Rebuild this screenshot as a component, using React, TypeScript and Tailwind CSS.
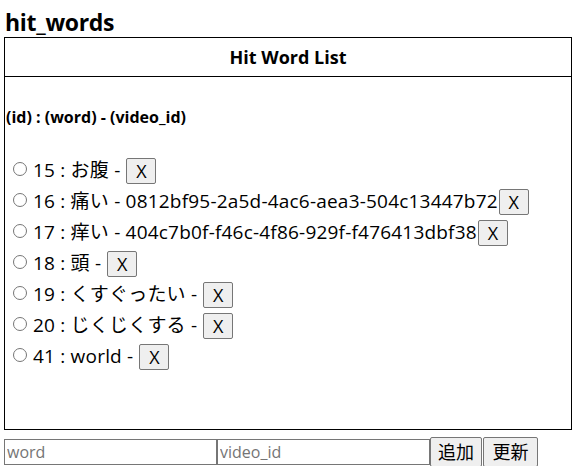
import React from 'react';

const WORDS = [
  { id: 15, word: 'お腹', video: '' },
  { id: 16, word: '痛い', video: '0812bf95-2a5d-4ac6-aea3-504c13447b72' },
  { id: 17, word: '痒い', video: '404c7b0f-f46c-4f86-929f-f476413dbf38' },
  { id: 18, word: '頭', video: '' },
  { id: 19, word: 'くすぐったい', video: '' },
  { id: 20, word: 'じくじくする', video: '' },
  { id: 41, word: 'world', video: '' },
];

const font = { fontFamily: '"Open Sans", "Noto Sans CJK JP", sans-serif' };

export default function App() {
  return (
    <div className="w-[572px] h-[466px] bg-white text-black overflow-hidden" style={font}>
      <h2 className="pl-[5px] pt-[7px] h-[37px] text-[23px] font-bold leading-[30px] tracking-[-0.3px]">hit_words</h2>

      {/* list box */}
      <div className="ml-[4px] w-[568px] h-[393px] border border-black flex flex-col">
        <div className="h-[39px] border-b border-black flex items-center justify-center text-[18px] font-bold">
          Hit Word List
        </div>
        <div className="pt-[29px] pl-px">
          <h4 className="text-[16px] font-bold leading-[22px]">(id) : (word) - (video_id)</h4>
          <ul className="mt-[27px] pl-[7px]">
            {WORDS.map((w) => (
              <li key={w.id} className="h-[31px] flex items-center text-[19px]">
                <span className="w-[14px] h-[14px] rounded-full border border-[#767676] mr-[6px] mt-[-4px] shrink-0" />
                <span className="whitespace-nowrap tracking-[0.2px]">
                  {w.id} : {w.word} - {w.video}
                </span>
                {w.video === '' && <span className="w-[5px]" />}
                <button className="h-[26px] w-[30px] ml-px border border-[#767676] rounded-[2px] bg-[#efefef] text-[18px] leading-none flex items-center justify-center">
                  X
                </button>
              </li>
            ))}
          </ul>
        </div>
      </div>

      {/* form */}
      <div className="mt-[7px] ml-[4px] flex items-center text-[18px]">
        <input
          placeholder="word"
          className="w-[213px] h-[26px] border border-[#767676] px-[2px] text-[16px] placeholder:text-[#757575] outline-none"
        />
        <input
          placeholder="video_id"
          className="w-[213px] h-[26px] border border-[#767676] px-[2px] text-[16px] placeholder:text-[#757575] outline-none"
        />
        <button className="h-[30px] w-[52px] border border-[#767676] rounded-[2px] bg-[#efefef]">追加</button>
        <button className="h-[30px] w-[55px] ml-px border border-[#767676] rounded-[2px] bg-[#efefef]">更新</button>
      </div>
    </div>
  );
}
